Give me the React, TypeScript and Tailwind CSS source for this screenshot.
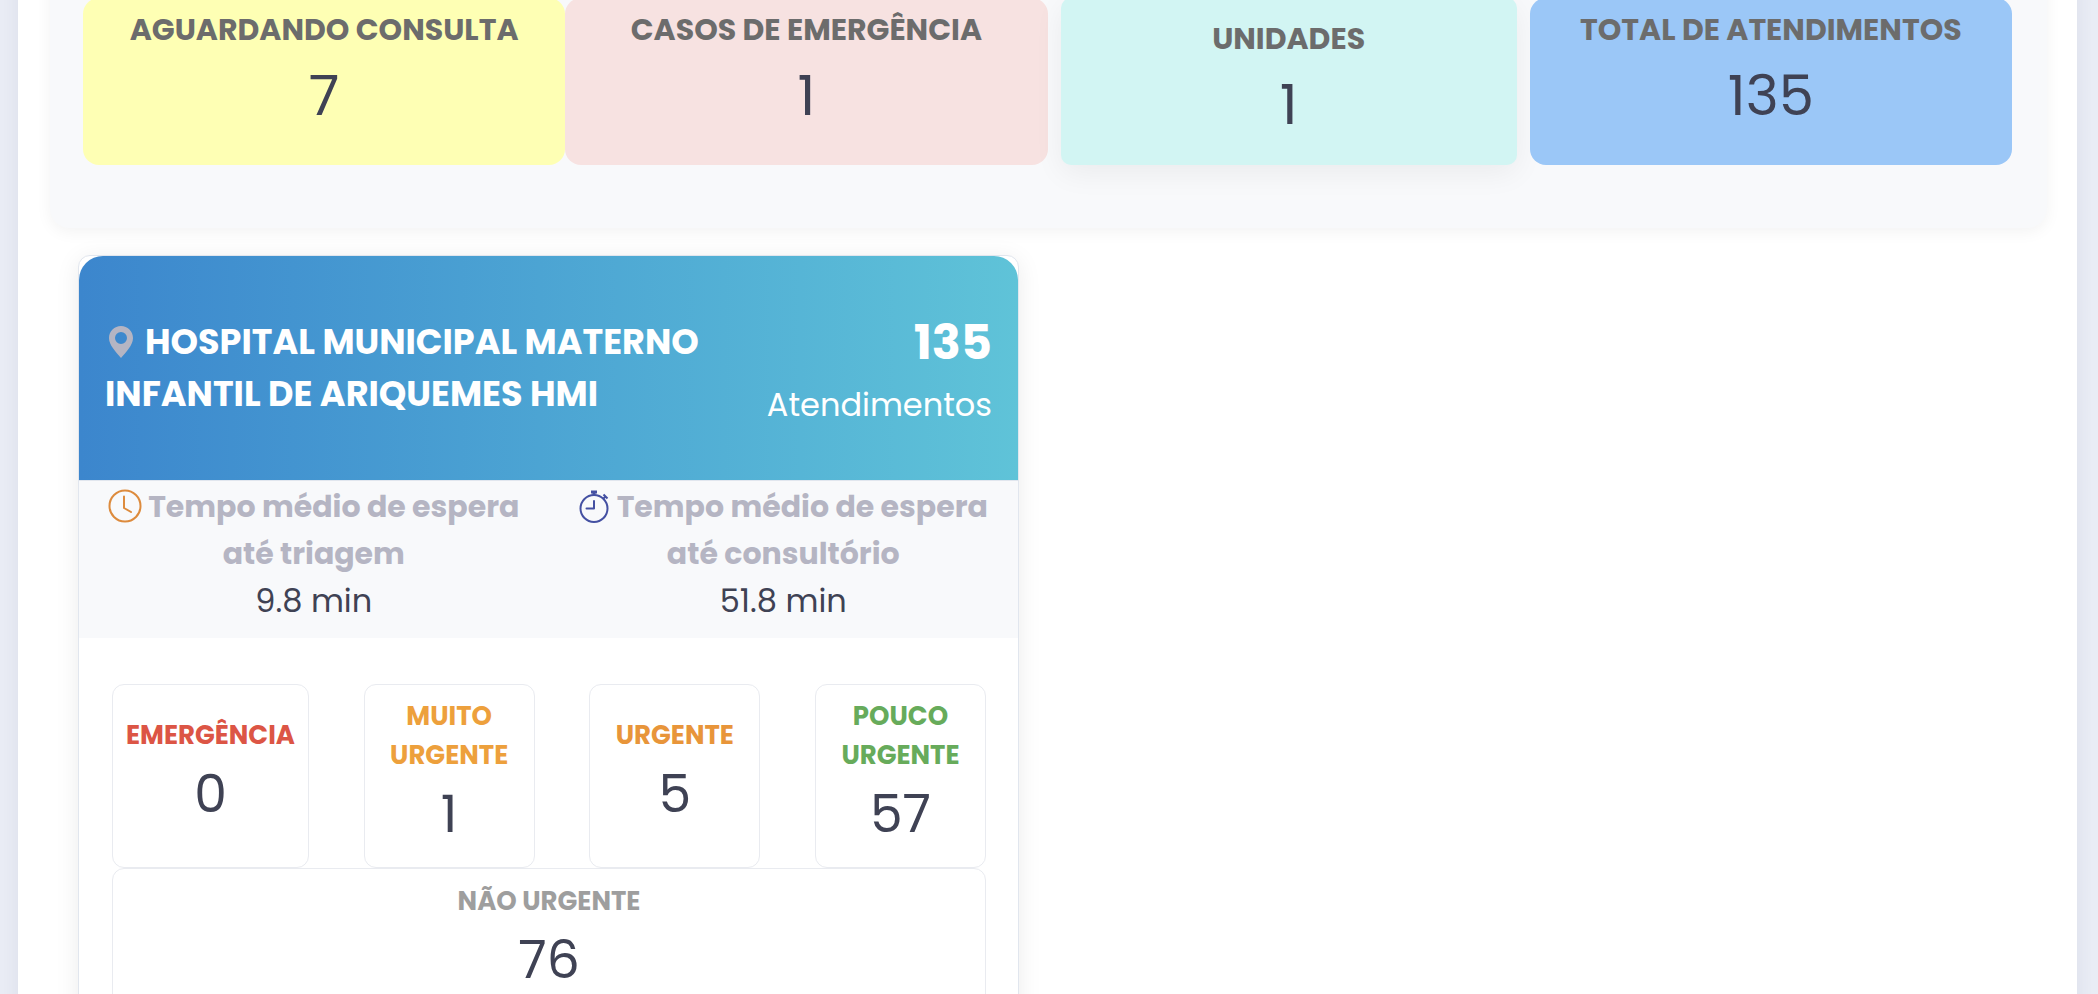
import type { ReactNode } from "react";
import clsx from "clsx";

const resumo = [
  { titulo: "AGUARDANDO CONSULTA", valor: 7, card: "rounded-2xl bg-[#feffb4] pt-2" },
  { titulo: "CASOS DE EMERGÊNCIA", valor: 1, card: "rounded-2xl bg-[#f7e2e1] pt-2" },
  { titulo: "UNIDADES", valor: 1, card: "mx-[13px] rounded-[10px] bg-[#d2f5f3] pt-[17px] shadow-[0_8px_30px_rgba(0,0,0,0.06)]" },
  { titulo: "TOTAL DE ATENDIMENTOS", valor: 135, card: "rounded-2xl bg-[#9bc7f7] pt-2" },
];

const classificacao = [
  { titulo: "EMERGÊNCIA", valor: 0, cor: "text-[#dc5545]", box: "w-[197px] pt-[31px]" },
  { titulo: "MUITO URGENTE", valor: 1, cor: "text-[#eda03c]", box: "w-[171px] pt-3" },
  { titulo: "URGENTE", valor: 5, cor: "text-[#e8953a]", box: "w-[171px] pt-[31px]" },
  { titulo: "POUCO URGENTE", valor: 57, cor: "text-[#67ab5b]", box: "w-[171px] pt-3" },
];

function PinIcon() {
  return (
    <svg width="24" height="32" viewBox="0 0 24 32" className="mr-3 ml-1 inline-block align-[-4px]" aria-hidden="true">
      <path
        fillRule="evenodd"
        fill="#b5b5c3"
        d="M12 0C5.4 0 0 5.3 0 12c0 3.6 1.7 7 4.2 10.6C6.5 26 9.6 29.2 12 32c2.4-2.8 5.5-6 7.8-9.4C22.3 19 24 15.6 24 12 24 5.3 18.6 0 12 0Zm0 6a6 6 0 1 1 0 12 6 6 0 0 1 0-12Z"
      />
    </svg>
  );
}

function ClockIcon() {
  return (
    <svg width="34" height="34" viewBox="0 0 34 34" fill="none" stroke="#dd8b3d" strokeWidth="2" strokeLinecap="round" strokeLinejoin="round" className="mr-1.5 inline-block align-[-6px]" aria-hidden="true">
      <circle cx="17" cy="17" r="15.5" />
      <path d="M16 7.5V19l7 4" />
    </svg>
  );
}

function StopwatchIcon() {
  return (
    <svg width="30" height="33" viewBox="0 0 30 33" fill="none" stroke="#4450a2" strokeWidth="2" className="mr-2 inline-block align-[-6px]" aria-hidden="true">
      <circle cx="15" cy="18.5" r="13.5" />
      <path d="M15 11v7.5H7.5" strokeLinecap="round" strokeLinejoin="round" />
      <path d="M12 2h6M15 2v3" strokeWidth="3" />
      <path d="M24.5 4.5l4 4M26.5 6.5L24 9" strokeWidth="2" />
    </svg>
  );
}

function Tempo({ icon, titulo, valor }: { icon: ReactNode; titulo: string; valor: string }) {
  return (
    <div className="px-6 text-center">
      <h3 className="text-[30px] leading-[47px] font-bold text-[#b5b5c3]">
        {icon}
        {titulo}
      </h3>
      <p className="text-[32px] leading-[48px]">{valor}</p>
    </div>
  );
}

export default function App() {
  return (
    <div className="h-screen overflow-hidden bg-[#e9ecf5] pr-[21px] pl-[18px] font-['Poppins','Inter',sans-serif] text-[#3f4254]">
      <main className="min-h-full bg-white shadow-[0_0_16px_rgba(60,60,90,0.08)]">
        {/* Resumo geral */}
        <section className="-mt-8 mr-[30px] ml-8 rounded-[20px] bg-[#f8f9fb] pt-[30px] pr-[35px] pb-[63px] pl-[33px] shadow-[0_4px_16px_rgba(0,0,0,0.05)]">
          <div className="grid grid-cols-4">
            {resumo.map((r) => (
              <div key={r.titulo} className={clsx("h-[167px] text-center", r.card)}>
                <h2 className="text-[30px] leading-[48px] font-bold text-[#6c6c6c]">{r.titulo}</h2>
                <p className="text-[56px] leading-[84px]">{r.valor}</p>
              </div>
            ))}
          </div>
        </section>

        {/* Unidades */}
        <div className="mt-[27px] mr-[63px] ml-[60px] grid grid-cols-2 gap-[54px]">
          <article className="rounded-xl border border-[#e1e6ee] bg-white shadow-[0_4px_24px_rgba(0,0,0,0.08)]">
            <header className="flex items-start justify-between rounded-t-3xl bg-linear-to-r from-[#3c86cd] to-[#5fc3d8] px-[26px] pt-[53px] pb-[47px] text-white">
              <h2 className="pt-[7px] text-[35px] leading-[52px] font-bold">
                <PinIcon />
                HOSPITAL MUNICIPAL MATERNO
                <br />
                INFANTIL DE ARIQUEMES HMI
              </h2>
              <div className="text-right">
                <p className="text-[48px] leading-[67px] font-bold">135</p>
                <p className="text-[32px] leading-[57px]">Atendimentos</p>
              </div>
            </header>

            <div className="grid grid-cols-2 border-t border-[#e1e6ee] bg-[#f8f9fb] pt-0.5 pb-[13px]">
              <Tempo icon={<ClockIcon />} titulo="Tempo médio de espera até triagem" valor="9.8 min" />
              <Tempo icon={<StopwatchIcon />} titulo="Tempo médio de espera até consultório" valor="51.8 min" />
            </div>

            <div className="pt-[46px] pr-8 pb-8 pl-[33px]">
              <div className="flex justify-between">
                {classificacao.map((c) => (
                  <div key={c.titulo} className={clsx("h-[184px] rounded-xl border border-[#e9ebf0] px-2.5 text-center", c.box)}>
                    <h4 className={clsx("text-[26px] leading-[39px] font-bold", c.cor)}>{c.titulo}</h4>
                    <p className="mt-3 text-[52px] leading-[54px]">{c.valor}</p>
                  </div>
                ))}
              </div>
              <div className="rounded-xl border border-[#e9ebf0] pt-[13px] pb-10 text-center">
                <h4 className="text-[26px] leading-[39px] font-bold text-[#9e9e9e]">NÃO URGENTE</h4>
                <p className="mt-3 text-[52px] leading-[54px]">76</p>
              </div>
            </div>
          </article>
        </div>
      </main>
    </div>
  );
}
